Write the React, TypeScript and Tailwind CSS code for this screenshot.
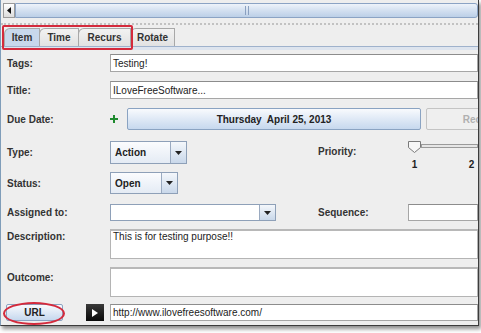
import { ReactNode } from 'react';

// Small building blocks for the Java-style form
function Label({ children, className = '' }: { children: ReactNode; className?: string }) {
  return (
    <div className={`w-[109px] shrink-0 pl-[6px] text-[10px] font-bold text-[#333] ${className}`}>
      {children}
    </div>
  );
}

function TextField({ value = '', className = '' }: { value?: string; className?: string }) {
  return (
    <div
      className={`flex-1 min-w-0 h-full bg-white border border-[#a6a6a6] border-t-[#8c8c8c] px-[2px] text-[10px] text-[#222] flex items-center whitespace-nowrap overflow-hidden ${className}`}
    >
      {value}
    </div>
  );
}

function ArrowButton() {
  return (
    <div className="w-[16px] h-full shrink-0 border-l border-[#9aaac0] bg-gradient-to-b from-[#f4f7fb] to-[#c9d8ea] flex items-center justify-center">
      <svg width="7" height="4" viewBox="0 0 7 4">
        <path d="M0 0h7L3.5 4z" fill="#222" />
      </svg>
    </div>
  );
}

function Combo({ value, width, white = false }: { value?: string; width: string; white?: boolean }) {
  return (
    <div className={`${width} h-full flex border border-[#8ea0b8] ${white ? 'bg-white' : 'bg-gradient-to-b from-[#fbfcfe] to-[#e4ebf4]'}`}>
      <div className="flex-1 pl-[4px] flex items-center text-[10px] font-bold text-[#222]">{value}</div>
      <ArrowButton />
    </div>
  );
}

const tabs = [
  { name: 'Item', w: 'w-[36px]', active: true },
  { name: 'Time', w: 'w-[40px]', active: false },
  { name: 'Recurs', w: 'w-[53px]', active: false },
  { name: 'Rotate', w: 'w-[45px]', active: false },
];

export default function App() {
  return (
    <div className="relative w-[481px] h-[333px] bg-white overflow-hidden font-['Liberation_Sans',Arial,sans-serif]">
      <div className="w-[479px] h-[326px] bg-[#eeeeee] border-l border-l-[#7f9db9] border-r border-b border-[#3c3c3c] shadow-[2px_3px_4px_rgba(0,0,0,0.45)] flex flex-col overflow-hidden">
        {/* Scrollbar */}
        <div className="mt-[3px] ml-[2px] h-[15px] flex">
          <div className="w-[12px] h-full border border-[#9a9a9a] bg-gradient-to-b from-[#ffffff] to-[#dcdcdc] flex items-center justify-center">
            <svg width="4" height="7" viewBox="0 0 4 7">
              <path d="M4 0v7L0 3.5z" fill="#111" />
            </svg>
          </div>
          <div className="flex-1 h-full border border-[#8ba3c4] rounded-r-[3px] bg-gradient-to-b from-[#eef3fa] via-[#d3e0f0] to-[#bccfe7] flex items-center justify-center">
            <div className="flex gap-[2px] h-[9px]">
              <div className="w-[1px] h-full bg-[#8aa0c0]" />
              <div className="w-[1px] h-full bg-[#8aa0c0]" />
            </div>
          </div>
        </div>

        {/* Dotted separator */}
        <div className="mt-[5px] h-0 border-t-2 border-dotted border-[#c2c2c2]" />

        {/* Tabs */}
        <div className="mt-[3px] h-[19px] flex items-end pl-[3px] border-b border-[#9fb2cc]">
          {tabs.map((t) => (
            <div
              key={t.name}
              className={`${t.w} h-full flex items-center justify-center text-[10px] font-bold text-[#333] border border-b-0 border-[#a8a8a8] rounded-tl-[6px] -ml-px first:ml-0 ${
                t.active ? 'bg-[#c8d8ec]' : 'bg-gradient-to-b from-[#f2f2f2] to-[#e2e2e2]'
              }`}
            >
              {t.name}
            </div>
          ))}
        </div>
        <div className="h-[3px] bg-[#dde4ee]" />

        {/* Form */}
        <div className="flex flex-col pt-[4px]">
          <div className="h-[18px] flex items-center">
            <Label>Tags:</Label>
            <TextField value="Testing!" />
          </div>

          <div className="mt-[9px] h-[18px] flex items-center">
            <Label>Title:</Label>
            <TextField value="ILoveFreeSoftware..." />
          </div>

          <div className="mt-[9px] h-[22px] flex items-center">
            <Label className="w-[106px]">Due Date:</Label>
            <svg width="8" height="8" viewBox="0 0 8 8" className="shrink-0">
              <path d="M3 0h2v3h3v2H5v3H3V5H0V3h3z" fill="#1e8a2e" />
            </svg>
            <div className="ml-[9px] w-[294px] h-full shrink-0 rounded-[2px] border border-[#8aa3c2] bg-gradient-to-b from-[#f8fafd] to-[#c6d8ee] flex items-center justify-center text-[10px] font-bold text-[#222] whitespace-pre">
              Thursday  April 25, 2013
            </div>
            <div className="ml-[5px] w-[102px] h-full shrink-0 rounded-[2px] border border-[#c4c4c4] bg-[#efefef] flex items-center justify-center text-[10px] font-bold text-[#b0b0b0]">
              Recur
            </div>
          </div>

          <div className="mt-[11px] h-[23px] flex">
            <Label className="self-center">Type:</Label>
            <div className="w-[208px] shrink-0 h-full">
              <Combo value="Action" width="w-[77px]" />
            </div>
            <div className="w-[90px] shrink-0 pt-[3px] text-[10px] font-bold text-[#333]">Priority:</div>
            <div className="flex-1 h-full flex flex-col">
              <div className="h-[12px] flex items-start">
                <svg width="13" height="12" viewBox="0 0 13 12" className="shrink-0">
                  <path d="M0.5 0.5h12v6l-6 5-6-5z" fill="#f7f7f7" stroke="#7a7a7a" />
                </svg>
                <div className="flex-1 mt-[3px] h-[4px] border border-[#9a9a9a] bg-[#e6e6e6]" />
              </div>
              <div className="flex mt-[4px] pl-[6px] gap-[56px] h-[5px]">
                <div className="w-[1px] h-full bg-[#b5b5b5]" />
                <div className="w-[1px] h-full bg-[#b5b5b5]" />
              </div>
              <div className="flex text-[10px] font-bold text-[#222] leading-[12px] mt-[2px]">
                <span className="w-[13px] text-center">1</span>
                <span className="ml-[44px] w-[13px] text-center">2</span>
              </div>
            </div>
          </div>

          <div className="mt-[8px] h-[22px] flex items-center">
            <Label>Status:</Label>
            <Combo value="Open" width="w-[68px]" />
          </div>

          <div className="mt-[10px] h-[17px] flex items-center">
            <Label>Assigned to:</Label>
            <div className="w-[208px] shrink-0 h-full">
              <Combo width="w-[166px]" white />
            </div>
            <div className="w-[90px] shrink-0 text-[10px] font-bold text-[#333]">Sequence:</div>
            <TextField />
          </div>

          <div className="mt-[8px] h-[30px] flex items-start">
            <Label className="pt-0">Description:</Label>
            <div className="flex-1 h-full bg-white border border-[#b4b4b4] border-t-2 border-t-[#b8b8b8] px-[2px] text-[10px] text-[#222] leading-[12px]">
              This is for testing purpose!!
            </div>
          </div>

          <div className="mt-[8px] h-[30px] flex items-start">
            <Label className="pt-[3px]">Outcome:</Label>
            <div className="flex-1 h-full bg-white border border-[#b4b4b4] border-t-2 border-t-[#b8b8b8]" />
          </div>

          <div className="mt-[7px] h-[17px] flex items-center">
            <div className="ml-[5px] w-[57px] h-full shrink-0 rounded-[2px] border border-[#8aa3c2] bg-gradient-to-b from-[#f8fafd] to-[#c6d8ee] flex items-center justify-center text-[10px] font-bold text-[#222]">
              URL
            </div>
            <div className="ml-[23px] w-[18px] h-[17px] shrink-0 bg-gradient-to-b from-[#3a3a3a] to-[#0a0a0a] flex items-center justify-center">
              <svg width="6" height="8" viewBox="0 0 6 8">
                <path d="M0 0l6 4-6 4z" fill="#fff" />
              </svg>
            </div>
            <div className="ml-[6px] flex-1 h-full">
              <TextField value="http://www.ilovefreesoftware.com/" />
            </div>
          </div>
        </div>
      </div>

      {/* Red annotation marks */}
      <div className="absolute left-[2px] top-[25px] w-[131px] h-[25px] border-2 border-[#d42a3c] rounded-[2px]" />
      <div className="absolute left-[3px] top-[302px] w-[62px] h-[23px] border-2 border-[#d42a3c] rounded-[50%]" />
    </div>
  );
}
